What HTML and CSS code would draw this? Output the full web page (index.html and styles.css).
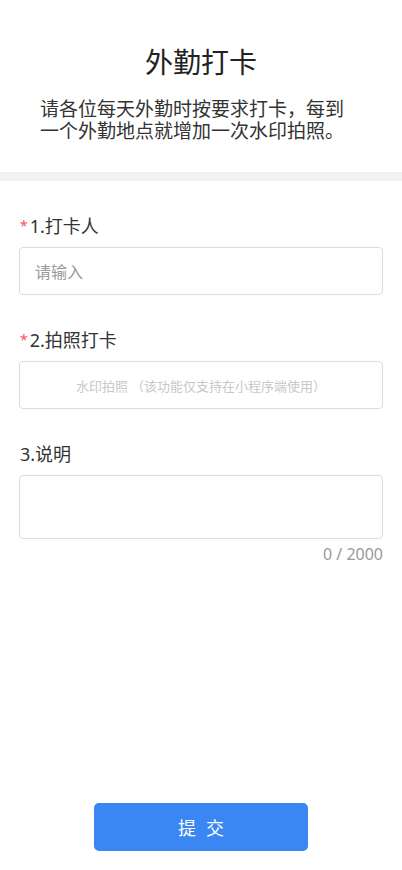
FILE: index.html
```html
<!DOCTYPE html>
<html lang="zh-CN">
<head>
<meta charset="utf-8">
<title>外勤打卡</title>
<link rel="stylesheet" href="styles.css">
</head>
<body>
<div class="page">
  <header class="header">
    <h1 class="title">外勤打卡</h1>
    <p class="desc">请各位每天外勤时按要求打卡，每到一个外勤地点就增加一次水印拍照。</p>
  </header>
  <div class="band"></div>
  <form class="form">
    <div class="item">
      <div class="label"><span class="req">*</span>1.打卡人</div>
      <div class="input"><span class="ph">请输入</span></div>
    </div>
    <div class="item">
      <div class="label"><span class="req">*</span>2.拍照打卡</div>
      <div class="input photo"><span class="ph-small">水印拍照 （该功能仅支持在小程序端使用）</span></div>
    </div>
    <div class="item">
      <div class="label">3.说明</div>
      <div class="textarea"></div>
      <div class="count">0 / 2000</div>
    </div>
  </form>
  <div class="footer">
    <button class="submit" type="button">提交</button>
  </div>
</div>
</body>
</html>
```
FILE: styles.css
```css
* { box-sizing: border-box; }
html, body { margin: 0; padding: 0; background: #fff; }
body {
  font-family: "Noto Sans", "Noto Sans CJK SC", sans-serif;
  color: #333;
}
.page {
  min-height: 870px;
  display: flex;
  flex-direction: column;
}
.header {
  padding: 41px 40px 31px;
}
.title {
  margin: 0;
  font-size: 28px;
  font-weight: 400;
  line-height: 40px;
  text-align: center;
  color: #222;
  font-family: "Noto Sans CJK SC", sans-serif;
}
.desc {
  margin: 16px 0 0;
  font-size: 19px;
  line-height: 22px;
  color: #333;
  font-family: "Noto Sans CJK SC", sans-serif;
}
.band {
  height: 9px;
  background: #f2f2f2;
}
.form {
  padding: 33px 19px 0;
  display: flex;
  flex-direction: column;
  gap: 33px;
}
.item {
  display: flex;
  flex-direction: column;
}
.label {
  font-size: 18px;
  line-height: 24px;
  color: #333;
  margin-bottom: 9px;
  padding-left: 1px;
}
.req {
  color: #f25757;
  font-size: 14px;
  margin-right: 2px;
  vertical-align: 2px;
}
.input {
  height: 48px;
  border: 1px solid #dcdcdc;
  border-radius: 4px;
  display: flex;
  align-items: center;
  padding: 0 15px;
}
.ph {
  font-size: 16px;
  color: #999;
  font-family: "Noto Sans CJK SC", sans-serif;
}
.photo { justify-content: center; }
.ph-small {
  font-size: 13px;
  color: #c8c8c8;
  font-family: "Noto Sans CJK SC", sans-serif;
}
.textarea {
  height: 64px;
  border: 1px solid #dcdcdc;
  border-radius: 4px;
}
.count {
  text-align: right;
  font-size: 16px;
  line-height: 24px;
  color: #999;
  margin-top: 3px;
}
.footer {
  margin-top: auto;
  display: flex;
  justify-content: center;
  padding-bottom: 19px;
}
.submit {
  width: 214px;
  height: 48px;
  border: none;
  border-radius: 5px;
  background: #3a87f4;
  color: #fff;
  font-size: 18px;
  letter-spacing: 10px;
  text-indent: 10px;
  font-family: "Noto Sans CJK SC", sans-serif;
}
```
